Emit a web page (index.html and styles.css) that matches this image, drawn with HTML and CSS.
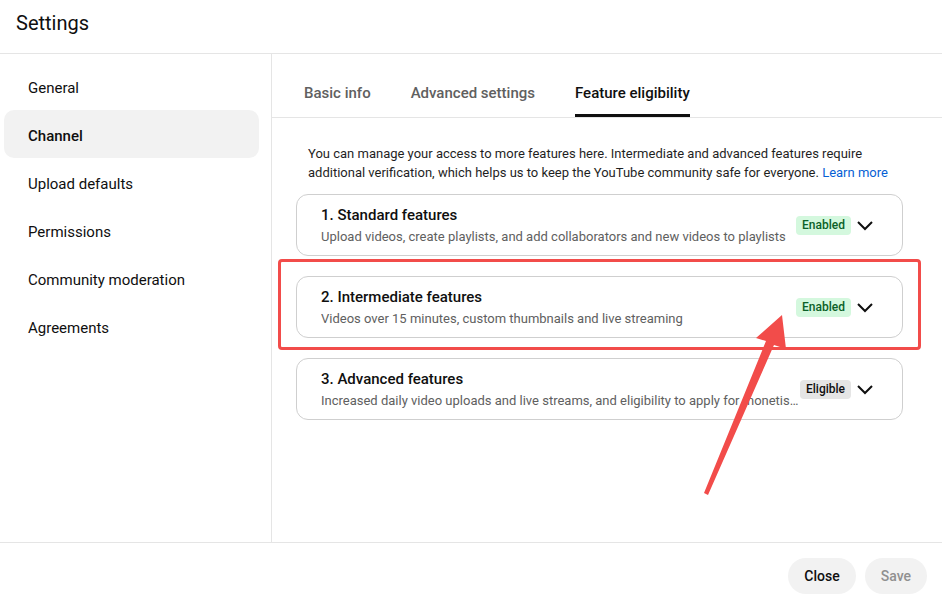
FILE: index.html
```html
<!DOCTYPE html>
<html lang="en">
<head>
    <meta charset="UTF-8">
    <meta name="viewport" content="width=device-width, initial-scale=1.0">
    <title>Settings</title>
    <link rel="stylesheet" href="styles.css">
</head>
<body>
    <div class="dialog">
        <div class="dialog-header">Settings</div>

        <div class="dialog-body">
            <div class="sidebar">
                <div class="nav-item">General</div>
                <div class="nav-item active">Channel</div>
                <div class="nav-item">Upload defaults</div>
                <div class="nav-item">Permissions</div>
                <div class="nav-item">Community moderation</div>
                <div class="nav-item">Agreements</div>
            </div>

            <div class="content">
                <div class="tabs">
                    <div class="tab">Basic info</div>
                    <div class="tab">Advanced settings</div>
                    <div class="tab active">Feature eligibility</div>
                </div>

                <div class="panel">
                    <p class="intro">You can manage your access to more features here. Intermediate and advanced features require additional verification, which helps us to keep the YouTube community safe for everyone. <a href="#">Learn more</a></p>

                    <div class="feature">
                        <div class="feature-text">
                            <div class="feature-title">1. Standard features</div>
                            <div class="feature-desc">Upload videos, create playlists, and add collaborators and new videos to playlists</div>
                        </div>
                        <span class="badge enabled">Enabled</span>
                        <svg class="chevron" viewBox="0 0 24 24"><path d="M5 9l7 7 7-7"/></svg>
                    </div>

                    <div class="feature">
                        <div class="feature-text">
                            <div class="feature-title">2. Intermediate features</div>
                            <div class="feature-desc">Videos over 15 minutes, custom thumbnails and live streaming</div>
                        </div>
                        <span class="badge enabled">Enabled</span>
                        <svg class="chevron" viewBox="0 0 24 24"><path d="M5 9l7 7 7-7"/></svg>
                    </div>

                    <div class="feature">
                        <div class="feature-text">
                            <div class="feature-title">3. Advanced features</div>
                            <div class="feature-desc">Increased daily video uploads and live streams, and eligibility to apply for monetisation</div>
                        </div>
                        <span class="badge eligible">Eligible</span>
                        <svg class="chevron" viewBox="0 0 24 24"><path d="M5 9l7 7 7-7"/></svg>
                    </div>
                </div>
            </div>
        </div>

        <div class="dialog-footer">
            <button class="btn">Close</button>
            <button class="btn disabled">Save</button>
        </div>
    </div>

    <!-- highlight drawn on top of the dialog -->
    <div class="highlight-box"></div>
    <svg class="highlight-arrow" width="942" height="603" viewBox="0 0 942 603">
        <polygon points="782,315 786,349 774,345 708,495 704,493 766,341 756,338"/>
    </svg>
</body>
</html>
```
FILE: styles.css
```css
body {
    margin: 0;
    padding: 0;
    background-color: #fff;
    font-family: Roboto, 'Liberation Sans', Arial, sans-serif;
    color: #0f0f0f;
}
.dialog {
    width: 942px;
    height: 603px;
    display: flex;
    flex-direction: column;
}
.dialog-header {
    height: 53px;
    padding-left: 16px;
    font-size: 20px;
    line-height: 46px;
    border-bottom: 1px solid #e5e5e5;
}
.dialog-body {
    flex: 1;
    display: flex;
    min-height: 0;
}
.sidebar {
    width: 271px;
    border-right: 1px solid #e5e5e5;
    padding-top: 8px;
}
.nav-item {
    width: 231px;
    height: 44px;
    margin-left: 4px;
    padding: 4px 0 0 24px;
    font-size: 15px;
    line-height: 44px;
    border-radius: 10px;
}
.nav-item.active {
    background-color: #f2f2f2;
    font-weight: 500;
}
.content {
    flex: 1;
}
.tabs {
    display: flex;
    gap: 40px;
    padding-left: 32px;
    border-bottom: 1px solid #e5e5e5;
}
.tab {
    padding: 29px 0 11px;
    font-size: 15px;
    line-height: 20px;
    font-weight: 500;
    color: #606060;
    border-bottom: 3px solid transparent;
}
.tab.active {
    color: #0f0f0f;
    border-bottom-color: #0f0f0f;
}
.panel {
    width: 607px;
    padding: 26px 0 0 24px;
}
.intro {
    margin: 0 0 12px;
    padding: 0 12px;
    font-size: 13px;
    line-height: 19px;
    color: #1f1f1f;
}
.intro a {
    color: #065fd4;
    text-decoration: none;
}
.feature {
    display: flex;
    align-items: center;
    height: 60px;
    padding: 0 25px 0 24px;
    margin-bottom: 20px;
    border: 1px solid #cfcfcf;
    border-radius: 12px;
}
.feature-text {
    flex: 1;
    min-width: 0;
}
.feature-title {
    font-size: 15px;
    line-height: 20px;
    font-weight: 500;
    margin-bottom: 3px;
}
.feature-desc {
    font-size: 13px;
    line-height: 18px;
    color: #606060;
    white-space: nowrap;
    overflow: hidden;
    text-overflow: ellipsis;
}
.badge {
    flex-shrink: 0;
    height: 19px;
    padding: 0 6px;
    font-size: 12px;
    line-height: 19px;
    font-weight: 500;
    border-radius: 4px;
}
.badge.enabled {
    background-color: #d4f8de;
    color: #0b6128;
}
.badge.eligible {
    background-color: #e5e5e5;
    color: #0f0f0f;
}
.chevron {
    flex-shrink: 0;
    width: 24px;
    height: 24px;
    margin-left: 2px;
}
.chevron path {
    fill: none;
    stroke: #0f0f0f;
    stroke-width: 2;
}
.dialog-footer {
    height: 45px;
    padding: 15px 15px 0 0;
    border-top: 1px solid #e5e5e5;
    display: flex;
    justify-content: flex-end;
    align-items: flex-start;
    gap: 9px;
}
.btn {
    height: 36px;
    padding: 0 16px;
    border: none;
    border-radius: 18px;
    background-color: #f2f2f2;
    font-family: inherit;
    font-size: 14px;
    font-weight: 500;
    color: #0f0f0f;
}
.btn.disabled {
    color: #909090;
}
.highlight-box {
    position: absolute;
    left: 278px;
    top: 259px;
    width: 637px;
    height: 85px;
    border: 3px solid #f24c4a;
    border-radius: 4px;
}
.highlight-arrow {
    position: absolute;
    left: 0;
    top: 0;
    pointer-events: none;
}
.highlight-arrow polygon {
    fill: #f24c4a;
}
```
